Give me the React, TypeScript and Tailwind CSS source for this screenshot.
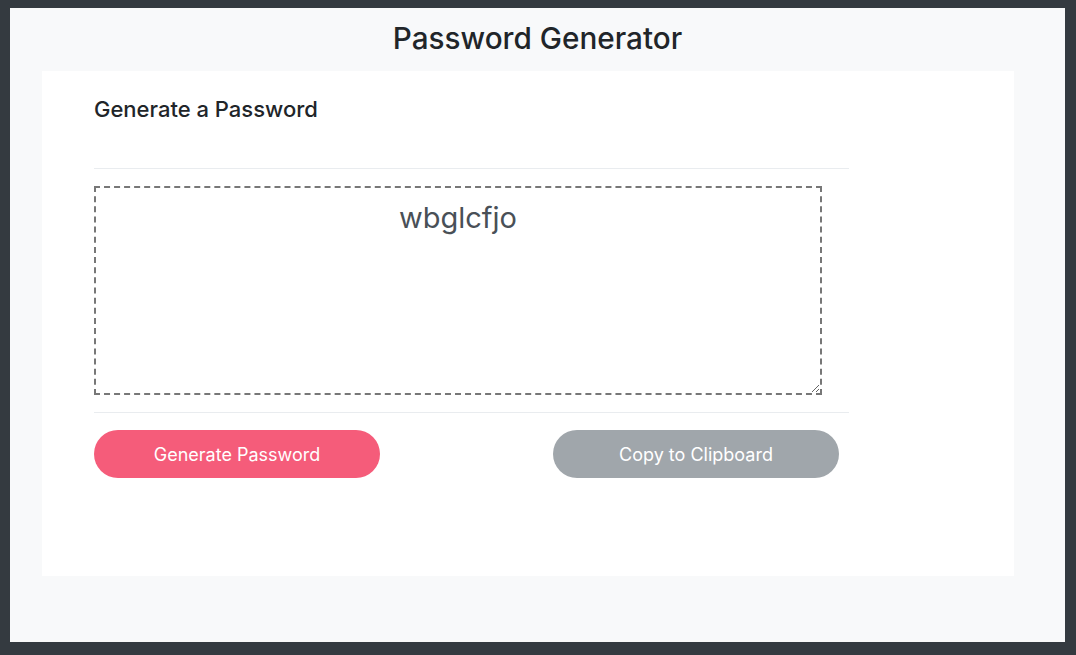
export default function App() {
  const password = 'wbglcfjo';

  return (
    <div
      className="w-[1076px] h-[655px] bg-[#343a40] pt-[8px] pl-[10px] pr-[11px] pb-[13px]"
      style={{ fontFamily: 'Inter, "Noto Sans", sans-serif' }}
    >
      <div className="h-[634px] bg-[#f8f9fa]">
        <h1 className="h-[63px] pt-[12px] text-center text-[29.7px] leading-[36px] font-medium text-[#212529]">
          Password Generator
        </h1>

        <div className="ml-[32px] w-[972px] h-[505px] bg-white pl-[52px] pt-[25px]">
          <div className="w-[755px]">
            <h2 className="text-[22px] leading-[26px] font-medium text-[#212529]">
              Generate a Password
            </h2>

            <hr className="mt-[46px] border-t border-[#e9ecef]" />

            <div className="pt-[17px] pb-[17px]">
              <textarea
                readOnly
                value={password}
                className="block w-[728px] h-[209px] border-2 border-dashed border-[#777] bg-white px-3 pt-[12px] text-center text-[29px] leading-[36px] text-[#495057] outline-none"
              />
            </div>

            <hr className="border-t border-[#e9ecef]" />

            <div className="mt-[17px] flex justify-between pr-[10px]">
              <button className="w-[286px] h-[48px] rounded-full bg-[#f55c7a] text-white text-[18px]">
                Generate Password
              </button>
              <button className="w-[286px] h-[48px] rounded-full bg-[#a0a6ab] text-white text-[18px]">
                Copy to Clipboard
              </button>
            </div>
          </div>
        </div>
      </div>
    </div>
  );
}
